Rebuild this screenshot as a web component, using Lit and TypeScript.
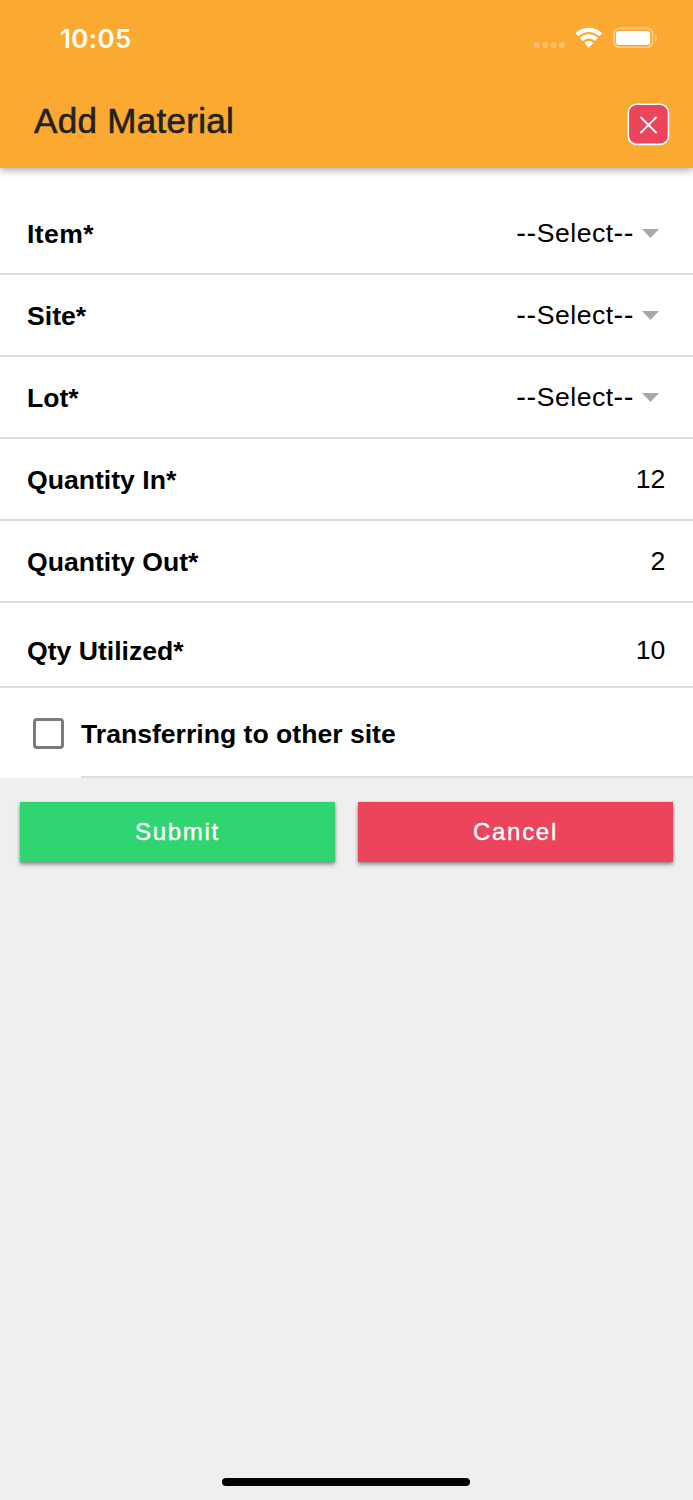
import { LitElement, html, css } from "lit";
import { customElement, property } from "lit/decorators.js";

@customElement("status-bar")
class StatusBar extends LitElement {
  static styles = css`
    :host { display: flex; justify-content: space-between; height: 76px; padding: 0 36px 0 60px; box-sizing: border-box; color: #fff; }
    .time { font: 600 26px/78px Inter, sans-serif; letter-spacing: 0.35px; }
    svg { display: block; }
  `;
  render() {
    return html`
      <span class="time">10:05</span>
      <svg width="124" height="76" viewBox="0 0 124 76" fill="#fff">
        <g opacity="0.25">
          <rect x="0.8" y="42" width="6" height="6" rx="2"/>
          <rect x="9.2" y="42" width="6" height="6" rx="2"/>
          <rect x="17.5" y="42" width="6" height="6" rx="2"/>
          <rect x="25.8" y="42" width="6" height="6" rx="2"/>
        </g>
        <path d="M43.1 34.1 Q42.3 33.4 43.1 32.7 C50.2 26.1 61.5 26.1 68.6 32.7 Q69.4 33.4 68.6 34.1 L66.9 35.8 Q66.3 36.4 65.6 35.8 C60.1 30.7 51.6 30.7 46.1 35.8 Q45.4 36.4 44.8 35.8 Z"/>
        <path d="M47.5 38.7 Q46.8 38 47.5 37.3 C52.2 33.1 59.5 33.1 64.2 37.3 Q64.9 38 64.2 38.7 L62.4 40.4 Q61.8 41 61.1 40.5 C58.1 37.9 53.6 37.9 50.6 40.5 Q49.9 41 49.3 40.4 Z"/>
        <path d="M52 43.6 Q51.3 42.9 52 42.3 C54.2 40.5 57.5 40.5 59.7 42.3 Q60.4 42.9 59.7 43.6 L56.5 47.2 Q55.85 47.9 55.2 47.2 Z"/>
        <rect x="81" y="28.4" width="38.6" height="18.8" rx="5.6" fill="none" stroke="#fff" stroke-width="1.6" opacity="0.42"/>
        <rect x="83" y="31" width="34" height="14" rx="3"/>
        <path d="M122 34.5 C124.6 35.8 124.6 40 122 41.3 Z" opacity="0.5"/>
      </svg>`;
  }
}

@customElement("form-row")
class FormRow extends LitElement {
  @property() label = "";
  @property() value = "";
  @property({ type: Boolean }) select = false;
  static styles = css`
    :host { display: flex; align-items: center; justify-content: space-between; height: 82px; padding: 1px 28px 0 27px; box-sizing: border-box; border-bottom: 2px solid #dedede; font-size: 26.6px; line-height: 32px; }
    .label { font-weight: 700; letter-spacing: var(--label-spacing, 0px); }
    .value { letter-spacing: 0.1px; margin-right: -0.5px; padding-bottom: 2px; }
    .choice { display: flex; align-items: center; margin-right: 6px; padding-bottom: 2px; letter-spacing: 0.45px; }
    .dash { letter-spacing: 0.6px; font-size: 29px; }
    .arrow { margin: 2px 0 0 8px; width: 17px; height: 9px; background: #a8a8a8; clip-path: polygon(0 0, 100% 0, 50% 100%); }
  `;
  render() {
    return html`
      <span class="label">${this.label}</span>
      ${this.select
        ? html`<span class="choice"><span class="dash">--</span>Select<span class="dash">--</span><span class="arrow"></span></span>`
        : html`<span class="value">${this.value}</span>`}`;
  }
}

@customElement("app-root")
class AppRoot extends LitElement {
  static styles = css`
    :host { display: flex; flex-direction: column; height: 1500px; background: #efefef; color: #000; font-family: "Liberation Sans", Arial, sans-serif; }
    header { height: 167.5px; background: #fca932; box-shadow: 0 2px 8px rgba(0, 0, 0, 0.36); position: relative; }
    .toolbar { display: flex; justify-content: space-between; align-items: flex-start; padding: 25px 23px 0 34px; }
    h1 { margin: 0; font-size: 35px; line-height: 40px; font-weight: 400; color: #222; letter-spacing: 0.3px; -webkit-text-stroke: 0.6px #222; }
    .close { display: block; margin-top: 2px; }
    .form { background: #fff; padding-top: 25.5px; }
    .short { --label-spacing: 0.4px; }
    .utilized { height: 85px; padding-top: 12px; }
    .transfer { display: flex; height: 90px; padding-left: 33px; }
    .box { width: 31px; height: 31px; box-sizing: border-box; border: 3.4px solid #7b7b7b; border-radius: 4px; margin: 30px 17px 0 0; }
    .caption { flex: 1; border-bottom: 2px solid #dedede; font-size: 26.6px; line-height: 92px; height: 88px; font-weight: 700; }
    .actions { display: flex; gap: 23px; padding: 24px 20px 0; }
    button { flex: 1; height: 60px; border: 0; padding: 0; color: #fff; font: 400 24px/60px "Liberation Sans", Arial, sans-serif; letter-spacing: 1.7px; -webkit-text-stroke: 0.4px #fff; box-shadow: 0 3px 4px rgba(0, 0, 0, 0.28), 0 1px 3px rgba(0, 0, 0, 0.25); }
    .submit { background: #2fd571; }
    .cancel { background: #ec445a; }
    .home { width: 248px; height: 8px; border-radius: 4px; background: #000; margin: auto auto 14px 222.4px; }
  `;
  render() {
    return html`
      <header>
        <status-bar></status-bar>
        <div class="toolbar">
          <h1>Add Material</h1>
          <svg class="close" width="43" height="43" viewBox="0 0 43 43">
            <rect x="1.3" y="1.2" width="40.2" height="40.2" rx="8.5" fill="#ec445a" stroke="#fff" stroke-width="1.6"/>
            <path d="M14 14.5 L29 29.5 M29 14.5 L14 29.5" stroke="#fff" stroke-width="1.8" stroke-linecap="round"/>
          </svg>
        </div>
      </header>
      <div class="form">
        <form-row class="short" label="Item*" select></form-row>
        <form-row label="Site*" select></form-row>
        <form-row label="Lot*" select></form-row>
        <form-row label="Quantity In*" value="12"></form-row>
        <form-row label="Quantity Out*" value="2"></form-row>
        <form-row class="utilized" label="Qty Utilized*" value="10"></form-row>
        <div class="transfer">
          <span class="box"></span>
          <span class="caption">Transferring to other site</span>
        </div>
      </div>
      <div class="actions">
        <button class="submit">Submit</button>
        <button class="cancel">Cancel</button>
      </div>
      <div class="home"></div>`;
  }
}
